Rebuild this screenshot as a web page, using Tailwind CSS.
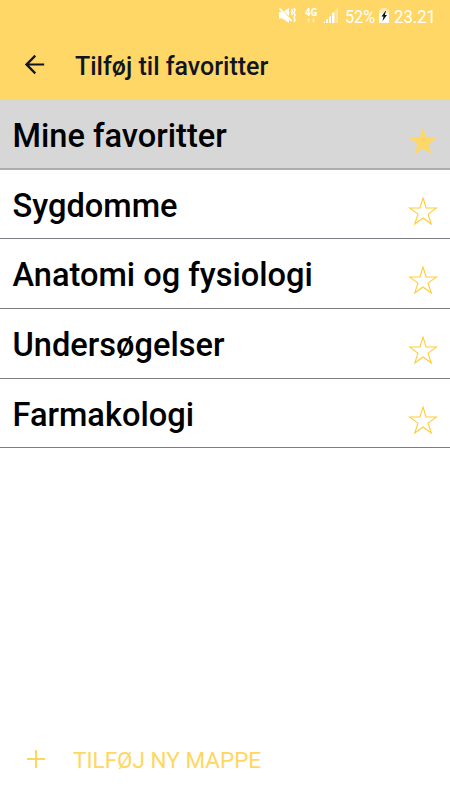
<!DOCTYPE html>
<html lang="da">
<head>
  <meta charset="UTF-8">
  <meta name="viewport" content="width=device-width, initial-scale=1.0">
  <title>Tilføj til favoritter</title>
  <script src="https://cdn.jsdelivr.net/npm/@tailwindcss/browser@4"></script>
</head>
<body class="h-screen overflow-hidden bg-white font-['Roboto',sans-serif] text-black">
  <div class="flex h-[800px] w-[450px] flex-col">
    <header class="h-[100px] shrink-0 bg-[#ffd766]">
      <!-- Status bar -->
      <div class="flex h-8 justify-end">
        <svg class="h-8 w-[186px] text-white" viewBox="0 0 186 32" fill="currentColor">
          <!-- Muted speaker -->
          <path d="M15 12h3.500l6.500-4v15l-6.500-4.500H15z"/>
          <path d="M17 9l12 12" stroke="#ffd766" stroke-width="1.2"/>
          <path d="M15.500 8.500l12 12.500" stroke="currentColor" stroke-width="1.8" fill="none"/>
          <path d="M27.500 9l1 2-1 2 1 2M30 8l1 2-1 2.500 1 2.500-1 2.500 1 2.500-1 2" stroke="currentColor" stroke-width="1.5" fill="none"/>
          <text x="41" y="16" font-size="10" font-weight="700" font-family="Open Sans, sans-serif" textLength="12.5" lengthAdjust="spacingAndGlyphs">4G</text>
          <path d="M42.500 20l2-2 2 2h-1.200v2.500h-1.600V20zM47.500 20.500h1.200V18h1.600v2.500h1.200l-2 2z" opacity=".45"/>
          <!-- Signal bars -->
          <path d="M59 23l2-1.500V23zM62 20l2-1.500V23h-2zM65 17l2-1.500V23h-2zM68 13.500l2.500-2V23H68z"/>
          <path d="M71.500 10L74 8v15h-2.500z" opacity=".4"/>
          <text x="81" y="22.500" font-size="19" textLength="30" lengthAdjust="spacingAndGlyphs">52%</text>
          <!-- Charging battery -->
          <path d="M117.500 8h5v1.500h2.500V13h-10V9.500h2.500z" opacity=".5"/>
          <path d="M115 13h10v10h-10z"/>
          <path d="M121.500 11l-4 5.500h2l-1 4.500 4.500-6h-2.200l1.200-4z" fill="#111"/>
          <text x="130" y="22.500" font-size="19" textLength="42" lengthAdjust="spacingAndGlyphs">23.21</text>
        </svg>
      </div>
      <!-- Toolbar -->
      <div class="flex h-[68px] items-center pl-5 text-[#111520]">
        <svg class="mb-[3px] h-[29px] w-[29px]" viewBox="0 0 24 24" fill="currentColor">
          <path d="M20 11.100H7.600l5.700-5.690L12 4l-8 8 8 8 1.300-1.410-5.700-5.690H20z"/>
        </svg>
        <h1 class="mt-[2px] ml-[26px] text-[25px] leading-8 font-medium whitespace-nowrap">Tilføj til favoritter</h1>
      </div>
    </header>

    <!-- Folders -->
    <ul class="shrink-0 text-[32.6px] leading-[38px] font-medium">
      <li class="flex h-[69.5px] justify-between border-b-2 border-[#adadad] bg-[#d7d7d7] pt-[17px] pr-[12.5px] pl-[12.5px]">
        <span>Mine favoritter</span>
        <svg class="mt-[9px] h-[30px] w-[30px]" viewBox="0 0 30 30">
          <path d="M15 1.500l3.350 10.300h10.850l-8.770 6.370 3.350 10.330L15 22.130l-8.780 6.370 3.350-10.330L.8 11.800h10.850z" fill="#ffd766"/>
        </svg>
      </li>
      <li class="flex h-[69.7px] justify-between border-b border-[#7c7c84] pt-[17px] pr-[12.5px] pl-[12.5px]">
        <span>Sygdomme</span>
        <svg class="mt-[9px] h-[30px] w-[30px]" viewBox="0 0 30 30">
          <path d="M15 2l3.100 10h10.400l-8.500 6.100 3.300 9.900L15 22l-8.300 6 3.300-9.900L1.500 12h10.400z" fill="none" stroke="#ffcd38" stroke-width="1.1"/>
        </svg>
      </li>
      <li class="flex h-[69.7px] justify-between border-b border-[#7c7c84] pt-[17px] pr-[12.5px] pl-[12.5px]">
        <span>Anatomi og fysiologi</span>
        <svg class="mt-[9px] h-[30px] w-[30px]" viewBox="0 0 30 30">
          <path d="M15 2l3.100 10h10.400l-8.500 6.100 3.300 9.900L15 22l-8.300 6 3.300-9.900L1.500 12h10.400z" fill="none" stroke="#ffcd38" stroke-width="1.1"/>
        </svg>
      </li>
      <li class="flex h-[69.7px] justify-between border-b border-[#7c7c84] pt-[17px] pr-[12.5px] pl-[12.5px]">
        <span>Undersøgelser</span>
        <svg class="mt-[9px] h-[30px] w-[30px]" viewBox="0 0 30 30">
          <path d="M15 2l3.100 10h10.400l-8.500 6.100 3.300 9.900L15 22l-8.300 6 3.300-9.900L1.500 12h10.400z" fill="none" stroke="#ffcd38" stroke-width="1.1"/>
        </svg>
      </li>
      <li class="flex h-[69.7px] justify-between border-b border-[#7c7c84] pt-[17px] pr-[12.5px] pl-[12.5px]">
        <span>Farmakologi</span>
        <svg class="mt-[9px] h-[30px] w-[30px]" viewBox="0 0 30 30">
          <path d="M15 2l3.100 10h10.400l-8.500 6.100 3.300 9.900L15 22l-8.300 6 3.300-9.900L1.500 12h10.400z" fill="none" stroke="#ffcd38" stroke-width="1.1"/>
        </svg>
      </li>
    </ul>

    <!-- New folder -->
    <button type="button" class="mt-auto mb-[24px] flex h-8 items-center pl-[27px] text-[#ffd75f]">
      <svg class="mb-[3px] h-[18px] w-[18px]" viewBox="0 0 18 18" fill="none" stroke="currentColor" stroke-width="2">
        <path d="M9 0v18M0 9h18"/>
      </svg>
      <span class="ml-[28px] text-[22.5px] leading-8 whitespace-nowrap">TILFØJ NY MAPPE</span>
    </button>
  </div>
</body>
</html>
